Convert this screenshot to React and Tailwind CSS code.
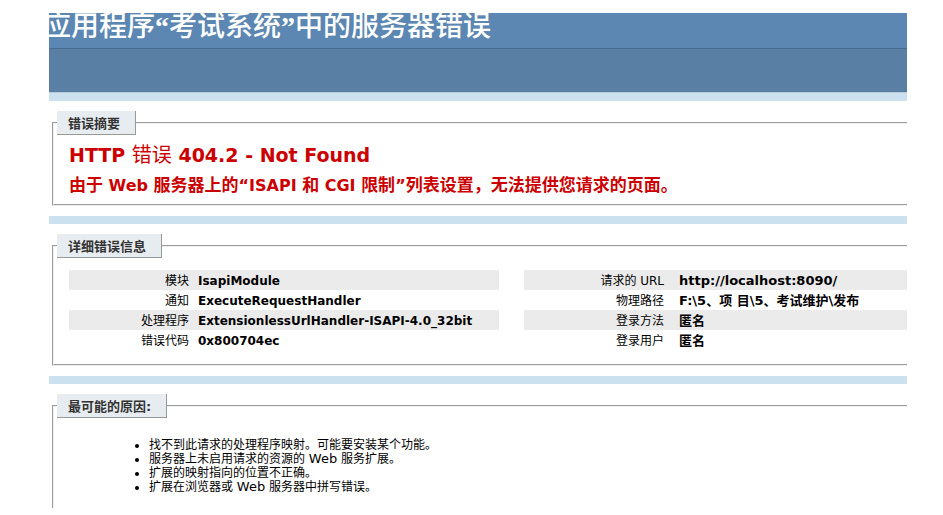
const moduleRows = [
  ["模块", "IsapiModule"],
  ["通知", "ExecuteRequestHandler"],
  ["处理程序", "ExtensionlessUrlHandler-ISAPI-4.0_32bit"],
  ["错误代码", "0x800704ec"],
];

const requestRows = [
  ["请求的 URL", "http://localhost:8090/"],
  ["物理路径", "F:\\5、项 目\\5、考试维护\\发布"],
  ["登录方法", "匿名"],
  ["登录用户", "匿名"],
];

const causes = [
  <>找不到此请求的处理程序映射。可能要安装某个功能。</>,
  <>
    服务器上未启用请求的资源的 <span className="text-[13px]">Web</span> 服务扩展。
  </>,
  <>扩展的映射指向的位置不正确。</>,
  <>
    扩展在浏览器或 <span className="text-[13px]">Web</span> 服务器中拼写错误。
  </>,
];

function Section({ title, className, children }) {
  return (
    <fieldset
      className={
        "ml-[3px] min-w-0 border-2 border-r-0 border-[#f0f0f0] pl-[3px] [border-style:groove] [border-right-style:none] " +
        className
      }
    >
      <legend className="h-6 border-r border-b border-[#999999] bg-[#e7ecf0] pr-[15px] pl-[11px] text-[13px] leading-[26px] font-bold text-[#333333]">
        {title}
      </legend>
      {children}
    </fieldset>
  );
}

function Details({ rows, labelClass, valueClass }) {
  return (
    <table className="w-full table-fixed border-collapse leading-[18px]">
      <tbody>
        {rows.map(([label, value]) => (
          <tr key={label} className="h-5 odd:bg-[#ebebeb]">
            <th
              scope="row"
              className={"pt-[2px] pb-0 pl-0 text-right text-[12px] font-normal " + labelClass}
            >
              {label}
            </th>
            <td className={"px-0 pt-[2px] pb-0 font-bold whitespace-nowrap " + valueClass}>
              {value}
            </td>
          </tr>
        ))}
      </tbody>
    </table>
  );
}

function Divider() {
  return <div className="h-2 bg-[#cbe1ef]" />;
}

export default function App() {
  return (
    <main className="mr-9 ml-[49px] overflow-hidden pt-[13px] pb-[7px] font-['DejaVu_Sans','Noto_Sans_CJK_SC',sans-serif] text-black">
      <header>
        <div className="h-9 overflow-hidden border-b border-[#4a6c8f] bg-[#5c87b2]">
          <h1 className="-ml-1.5 font-['Liberation_Serif','Noto_Sans_CJK_SC',serif] text-[28px] leading-7 font-medium whitespace-nowrap text-white">
            应用程序<span className="font-bold">“</span>考试系统
            <span className="font-bold">”</span>中的服务器错误
          </h1>
        </div>
        <div className="h-11 border-b border-[#b9c9d6] bg-[#5a7fa5]" />
        <Divider />
      </header>

      <Section title="错误摘要" className="mt-[10px] mb-[10px] h-[95px]">
        <div className="pl-3 text-[#cc0000]">
          <h2 className="mt-2 text-[19px] leading-6 font-bold">
            HTTP <span className="text-[20px] font-normal">错误</span> 404.2 - Not Found
          </h2>
          <h3 className="mt-[6px] text-[17px] leading-6 font-bold">
            由于<span className="text-[16px]"> Web </span>服务器上的
            <span className="text-[16px]">“ISAPI </span>和
            <span className="text-[16px]"> CGI </span>限制
            <span className="text-[16px]">”</span>列表设置，无法提供您请求的页面。
          </h3>
        </div>
      </Section>
      <Divider />

      <Section title="详细错误信息" className="mt-[10px] mb-[10px] h-[132px]">
        <div className="grid grid-cols-[430fr_383fr] gap-[25px] pt-3 pl-3">
          <Details rows={moduleRows} labelClass="w-[129px] pr-[9px]" valueClass="text-[12px]" />
          <Details rows={requestRows} labelClass="w-[155px] pr-[15px]" valueClass="text-[13px]" />
        </div>
      </Section>
      <Divider />

      <Section title="最可能的原因:" className="mt-[10px] border-b-0 pb-[14px]">
        <ul className="list-disc pt-5 pl-[92px] text-[12px] leading-[14px]">
          {causes.map((cause, index) => (
            <li key={index}>{cause}</li>
          ))}
        </ul>
      </Section>
    </main>
  );
}
